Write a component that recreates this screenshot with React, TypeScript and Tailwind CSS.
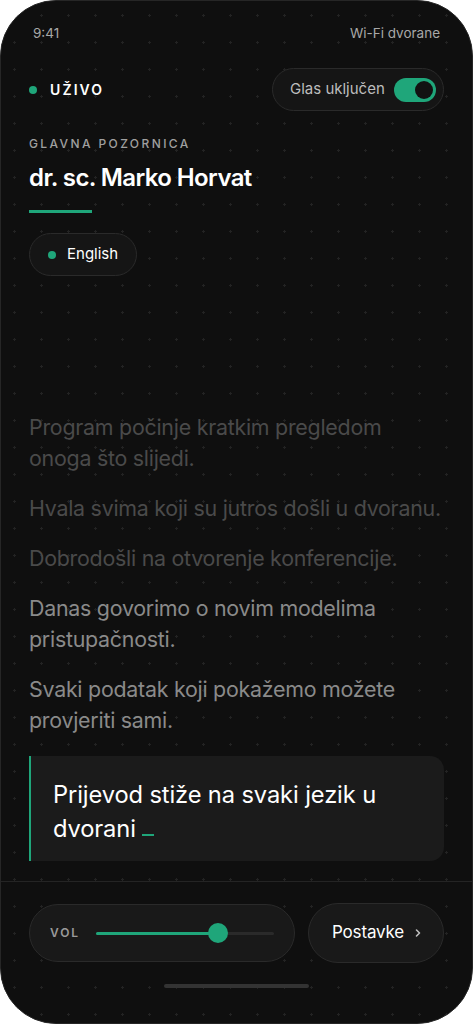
import React from "react";

export default function App() {
  return (
    <div className="w-[473px] h-[1024px] bg-white" style={{ fontFamily: "Inter, 'Noto Sans', sans-serif" }}>
      <div className="relative w-full h-full rounded-[56px] border border-[#262626] bg-[#0f0f0f] overflow-hidden flex flex-col bg-[radial-gradient(circle,#232323_1px,transparent_1.2px)] bg-[size:27px_27px] bg-[position:0px_1px]">
        {/* status bar */}
        <div className="flex justify-between pl-[32px] pr-[32px] pt-[24px] text-[13.5px] leading-[16px] text-[#a8a8a8]">
          <span>9:41</span>
          <span>Wi-Fi dvorane</span>
        </div>

        {/* header row */}
        <div className="mt-[27px] px-[28px] flex items-center justify-between h-[43px]">
          <div className="flex items-center gap-[13px]">
            <span className="w-[8px] h-[8px] rounded-full bg-[#1fa67a]" />
            <span className="text-[14px] font-semibold tracking-[0.15em] text-white">UŽIVO</span>
          </div>
          <div className="h-[43px] w-[172px] rounded-full border border-[#2a2a2a] bg-[#151515] flex items-center justify-between pl-[17px] pr-[7px]">
            <span className="text-[15px] text-[#bdbdbd]">Glas uključen</span>
            <span className="w-[42px] h-[24px] rounded-full bg-[#1fa67a] flex items-center justify-end pr-[3px]">
              <span className="w-[18px] h-[18px] rounded-full bg-[#121212]" />
            </span>
          </div>
        </div>

        <div className="px-[28px]">
          <div className="mt-[25px] text-[12px] leading-[16px] tracking-[0.2em] text-[#a0a0a0] font-medium">GLAVNA POZORNICA</div>
          <div className="mt-[11px] text-[24px] leading-[30px] font-semibold tracking-[-0.025em] text-white">dr. sc. Marko Horvat</div>
          <div className="mt-[17px] w-[63px] h-[3px] bg-[#1fa67a]" />
          <div className="mt-[20px] inline-flex items-center h-[43px] rounded-full border border-[#2a2a2a] bg-[#151515] pl-[18px] pr-[18px] gap-[11px]">
            <span className="w-[8px] h-[8px] rounded-full bg-[#1fa67a]" />
            <span className="text-[15px] text-white">English</span>
          </div>
        </div>

        {/* transcript */}
        <div className="flex-1 flex flex-col justify-end px-[28px] pb-[20px] gap-[19px] text-[21.4px] leading-[31px] tracking-[-0.012em]">
          <p className="text-[#4a4a4a]">Program počinje kratkim pregledom<br />onoga što slijedi.</p>
          <p className="text-[#4a4a4a]">Hvala svima koji su jutros došli u dvoranu.</p>
          <p className="text-[#4a4a4a]">Dobrodošli na otvorenje konferencije.</p>
          <p className="text-[#8a8a8a]">Danas govorimo o novim modelima<br />pristupačnosti.</p>
          <p className="text-[#8a8a8a]">Svaki podatak koji pokažemo možete<br />provjeriti sami.</p>
          <div className="mt-[1px] border-l-2 border-[#1fa67a] bg-[#1b1b1b] rounded-r-[14px] pl-[22px] pr-[20px] pt-[22px] pb-[15px] text-[23.7px] leading-[34px] tracking-[-0.005em] text-white">
            Prijevod stiže na svaki jezik u<br />dvorani{" "}
            <span className="inline-block w-[12px] h-[2px] bg-[#1fa67a] align-[1px]" />
          </div>
        </div>

        {/* bottom */}
        <div className="border-t border-[#242424] px-[28px] pt-[21px] pb-[35px] flex flex-col items-center">
          <div className="w-full flex gap-[13px] items-center">
            <div className="w-[266px] h-[58px] rounded-full border border-[#2a2a2a] bg-[#191919] flex items-center pl-[20px] pr-[20px] gap-[16px]">
              <span className="text-[12px] font-semibold tracking-[0.16em] text-[#9a9a9a]">VOL</span>
              <div className="relative flex-1 h-[3px] rounded-full bg-[#2a2a2a]">
                <div className="absolute left-0 top-0 h-[3px] rounded-full bg-[#1fa67a] w-[122px]" />
                <div className="absolute top-1/2 -translate-y-1/2 left-[112px] w-[20px] h-[20px] rounded-full bg-[#1fa67a]" />
              </div>
            </div>
            <div className="flex-1 h-[60px] rounded-full border border-[#2a2a2a] bg-[#191919] flex items-center pl-[23px] pr-[20px] justify-between">
              <span className="text-[17px] text-white tracking-[-0.01em]">Postavke</span>
              <svg width="10" height="10" viewBox="0 0 10 10" fill="none" stroke="#bdbdbd" strokeWidth="1.6" strokeLinecap="round" strokeLinejoin="round">
                <path d="M3.5 2 L6.5 5 L3.5 8" />
              </svg>
            </div>
          </div>
          <div className="mt-[21px] w-[145px] h-[4px] rounded-full bg-[#333333]" />
        </div>
      </div>
    </div>
  );
}
